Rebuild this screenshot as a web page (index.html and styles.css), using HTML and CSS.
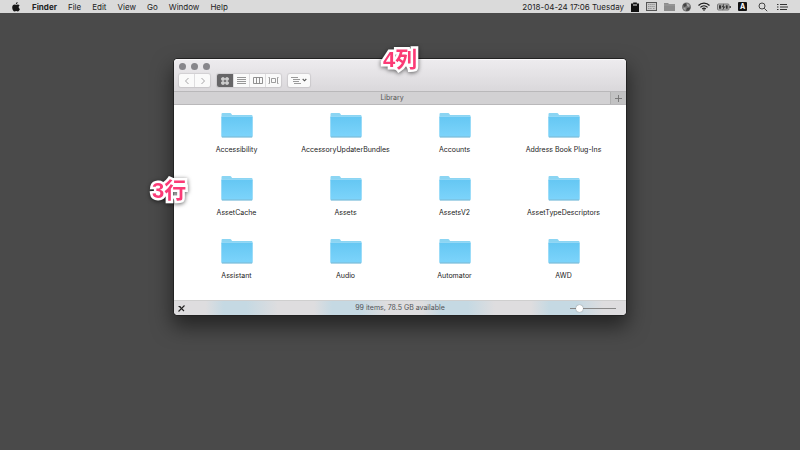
FILE: index.html
```html
<!DOCTYPE html>
<html lang="en">
<head>
<meta charset="utf-8">
<title>Library</title>
<link rel="stylesheet" href="styles.css">
</head>
<body>
<header class="menubar">
  <nav class="menus">
    <button class="menu" aria-label="Apple"><svg width="8" height="10" viewBox="0 0 8 10"><path fill="#161616" d="M5.6 0C5.6 1.3 4.9 2.2 3.8 2.2 3.8 1 4.6.2 5.6 0ZM4.1 2.8C4.7 2.8 5 2.4 5.8 2.4 6.6 2.4 7.2 2.8 7.6 3.4 6.2 4.2 6.4 6.2 7.9 6.9 7.4 8.2 6.7 9.4 5.8 9.4 5.2 9.4 4.9 9.1 4.2 9.1 3.5 9.1 3.2 9.4 2.6 9.4 1.4 9.4.2 7.4.2 5.4.2 3.5 1.3 2.4 2.6 2.4 3.2 2.4 3.7 2.8 4.1 2.8Z"/></svg></button>
    <button class="menu menu-app">Finder</button>
    <button class="menu">File</button>
    <button class="menu">Edit</button>
    <button class="menu">View</button>
    <button class="menu">Go</button>
    <button class="menu">Window</button>
    <button class="menu">Help</button>
  </nav>
  <div class="status">
    <time class="clock">2018-04-24 17:06 Tuesday</time>
    <svg width="8" height="10" viewBox="0 0 8 10"><path fill="#111" d="M0 1.5H2.2V.5H5.8V1.5H8V10H0Z"/><path fill="#ccc" d="M2 2.4H6V3.6H2Z"/></svg>
    <svg width="11" height="9" viewBox="0 0 11 9"><rect x=".5" y=".5" width="10" height="8" fill="#c8c8c8" stroke="#555"/><path stroke="#888" stroke-width=".8" d="M2 2.5H9M2 4.5H9M2 6.5H6M7 6.5H9" stroke-dasharray="1.5 .6"/></svg>
    <svg width="11" height="9" viewBox="0 0 11 9"><path fill="#8c8c8c" d="M0 1H4L5 2H11V9H0Z"/><path stroke="#a8a8a8" stroke-width=".6" d="M0 3H11"/></svg>
    <svg width="9" height="10" viewBox="0 0 9 10"><circle cx="4.5" cy="5" r="4.5" fill="#777"/><path fill="#444" d="M1 2.5 4 1 4.5 4 2 5ZM5 6 8.5 5.5 7 8.5 4 9Z"/><path fill="#aaa" d="M5 1.5 7.5 3 7 5 5 4ZM1 6 3.5 5.5 3.5 8.5Z"/></svg>
    <svg width="12" height="9" viewBox="0 0 12 9"><g fill="none" stroke="#1c1c1c" stroke-width="1.2"><path d="M.5 3.5C3.5.2 8.5.2 11.5 3.5M2.4 5.3C4.5 3.2 7.5 3.2 9.6 5.3M4.2 7C5.3 6 6.7 6 7.8 7"/></g><path fill="#1c1c1c" d="M4.8 7.7 6 9 7.2 7.7Q6 6.9 4.8 7.7Z"/></svg>
    <svg width="14" height="8" viewBox="0 0 14 8"><rect x=".5" y="1" width="11.5" height="6" rx="1" fill="#b4b4b4" stroke="#777"/><path fill="#333" d="M2 2.2H4.2V5.8H2ZM8.8 2.2H10.7V5.8H8.8ZM12.5 3H13.8V5H12.5ZM7 .5 4.5 4.3H6.2L5.5 7.5 8.5 3.5H6.7Z"/></svg>
    <span class="input-source">A</span>
    <svg class="search" width="10" height="10" viewBox="0 0 10 10"><g fill="none" stroke="#444"><circle cx="4" cy="4" r="3"/><path d="M6.2 6.2 9.2 9.2"/></g></svg>
    <svg width="11" height="8" viewBox="0 0 11 8"><path stroke="#333" d="M0 1.5H1.5M0 4H1.5M0 6.5H1.5M3 1.5H10M3 4H11M3 6.5H10"/></svg>
  </div>
</header>

<main class="desktop">
  <section class="window">
    <span class="note note-columns" lang="ja">4列</span>
    <span class="note note-rows" lang="ja">3行</span>
    <div class="titlebar">
      <div class="lights">
        <button class="light" aria-label="Close"></button>
        <button class="light" aria-label="Minimize"></button>
        <button class="light" aria-label="Zoom"></button>
      </div>
      <div class="toolbar">
        <div class="group">
          <button class="tool" aria-label="Back"><svg width="6" height="8" viewBox="0 0 6 8"><path d="M4.5 1 1.5 4 4.5 7" fill="none" stroke="#a5a4a6"/></svg></button>
          <button class="tool" aria-label="Forward"><svg width="6" height="8" viewBox="0 0 6 8"><path d="M1.5 1 4.5 4 1.5 7" fill="none" stroke="#a5a4a6"/></svg></button>
        </div>
        <div class="group">
          <button class="tool tool-active" aria-label="Icons"><svg width="8" height="8" viewBox="0 0 8 8"><g fill="#c4c4c4" stroke="#fff" stroke-width=".6"><rect x=".7" y=".7" width="2.6" height="2.6" rx=".5"/><rect x="4.7" y=".7" width="2.6" height="2.6" rx=".5"/><rect x=".7" y="4.7" width="2.6" height="2.6" rx=".5"/><rect x="4.7" y="4.7" width="2.6" height="2.6" rx=".5"/></g></svg></button>
          <button class="tool" aria-label="List"><svg width="9" height="7" viewBox="0 0 9 7"><path stroke="#8b8b8b" stroke-width=".9" d="M0 .5H9M0 2.5H9M0 4.5H9M0 6.5H9"/></svg></button>
          <button class="tool" aria-label="Columns"><svg width="10" height="7" viewBox="0 0 10 7"><path fill="none" stroke="#858585" stroke-width=".9" d="M.5.5H9.5V6.5H.5ZM3.5.5V6.5M6.5.5V6.5"/></svg></button>
          <button class="tool" aria-label="Cover Flow"><svg width="11" height="7" viewBox="0 0 11 7"><path fill="none" stroke="#858585" stroke-width=".8" d="M3.5 1.5H7.5V5.5H3.5ZM.5.5H1.5V6.5H.5M10.5.5H9.5V6.5H10.5"/></svg></button>
        </div>
        <div class="group">
          <button class="tool tool-wide" aria-label="Arrange"><svg width="16" height="7" viewBox="0 0 16 7"><path stroke="#8f8f8f" stroke-width=".9" d="M0 .5H7M2 2.5H9M2 4.5H8M3 6.5H10"/><path d="M11.7 2 13.5 3.8 15.3 2" fill="none" stroke="#555" stroke-width="1.1"/></svg></button>
        </div>
      </div>
    </div>
    <div class="tabs">
      <button class="tab">Library</button>
      <button class="tab-add" aria-label="New tab"><svg width="7" height="7" viewBox="0 0 7 7"><path stroke="#737373" stroke-width=".9" d="M3.5 0V7M0 3.5H7"/></svg></button>
    </div>
    <svg class="defs" width="0" height="0" aria-hidden="true">
      <defs>
        <linearGradient id="front" x1="0" y1="0" x2="0" y2="1"><stop offset="0" stop-color="#65c7f3"/><stop offset="1" stop-color="#7dd4fb"/></linearGradient>
        <symbol id="folder" viewBox="0 0 32 26"><path fill="#8bd5f3" d="M.5 2Q.5 1 1.5 1H9Q10 1 10.5 2L11 3H30.5Q31.5 3 31.5 4V24H.5Z"/><path fill="#c1e8f8" d="M.5 4H31.5V5H.5Z"/><rect x=".5" y="4.6" width="31" height="20.6" rx=".6" fill="url(#front)"/><path fill="#7db8d2" d="M.5 24.6H31.5L31 25.4H1Z"/></symbol>
      </defs>
    </svg>
    <ul class="files">
      <li class="file"><svg class="folder"><use href="#folder"/></svg><span>Accessibility</span></li>
      <li class="file"><svg class="folder"><use href="#folder"/></svg><span>AccessoryUpdaterBundles</span></li>
      <li class="file"><svg class="folder"><use href="#folder"/></svg><span>Accounts</span></li>
      <li class="file"><svg class="folder"><use href="#folder"/></svg><span>Address Book Plug-Ins</span></li>
      <li class="file"><svg class="folder"><use href="#folder"/></svg><span>AssetCache</span></li>
      <li class="file"><svg class="folder"><use href="#folder"/></svg><span>Assets</span></li>
      <li class="file"><svg class="folder"><use href="#folder"/></svg><span>AssetsV2</span></li>
      <li class="file"><svg class="folder"><use href="#folder"/></svg><span>AssetTypeDescriptors</span></li>
      <li class="file"><svg class="folder"><use href="#folder"/></svg><span>Assistant</span></li>
      <li class="file"><svg class="folder"><use href="#folder"/></svg><span>Audio</span></li>
      <li class="file"><svg class="folder"><use href="#folder"/></svg><span>Automator</span></li>
      <li class="file"><svg class="folder"><use href="#folder"/></svg><span>AWD</span></li>
    </ul>
    <footer class="statusbar">
      <svg width="7" height="7" viewBox="0 0 7 7"><path stroke="#222" stroke-width="1.1" d="M.5 6.5 6.5.5M1.5 1.5 6 6"/><path stroke="#222" d="M.5 1.5H2.5"/></svg>
      <span>99 items, 78.5 GB available</span>
      <input class="size" type="range" min="0" max="100" value="15" aria-label="Icon size">
    </footer>
  </section>
</main>
</body>
</html>
```
FILE: styles.css
```css
* { box-sizing: border-box; }

body {
  margin: 0;
  min-height: 100vh;
  background: #4a4a4a;
  font-family: Inter, "Noto Sans CJK JP", sans-serif;
  font-size: 7px;
  line-height: 10px;
  color: #222;
}

button {
  margin: 0;
  padding: 0;
  border: 0;
  background: none;
  color: inherit;
  font: inherit;
}

svg { display: block; flex: none; }

.menubar {
  display: flex;
  justify-content: space-between;
  align-items: center;
  height: 13px;
  padding: 0 12px;
  background: #dadada;
  font-size: 8px;
}

.menus { display: flex; align-items: center; gap: 11px; }
.menu-app { padding-left: 1px; font-weight: 700; }
.status { display: flex; align-items: center; gap: 7px; }

.input-source {
  width: 9px;
  height: 9px;
  border-radius: 1px;
  background: #111;
  color: #fff;
  font-size: 7px;
  font-weight: 700;
  line-height: 9px;
  text-align: center;
}

.search { margin: 0 2px 0 4px; }

.desktop { padding-top: 46px; }

.window {
  position: relative;
  width: 56.5%;
  margin: 0 auto;
  border-radius: 4px;
  background: #fff;
  box-shadow: 0 0 0 1px #222, 0 10px 20px 2px rgba(0, 0, 0, 0.5);
}

.titlebar {
  padding: 4px 5px;
  border-radius: 4px 4px 0 0;
  background: linear-gradient(#eeecef, #dad8db);
  box-shadow: inset 0 1px #f8f7f8;
}

.lights { display: flex; gap: 5px; }

.light {
  width: 7px;
  height: 7px;
  border-radius: 50%;
  background: #87868b;
}

.toolbar { display: flex; gap: 7px; padding-top: 4px; }

.group {
  display: flex;
  gap: 1px;
  border-radius: 2px;
  background: #dedddf;
  box-shadow: 0 0 1px 1px rgba(0, 0, 0, 0.09);
  overflow: hidden;
}

.tool {
  display: grid;
  place-items: center;
  width: 15px;
  height: 13px;
  background: #fafafa;
}

.tool-active { width: 16px; background: #666567; }
.tool-wide { width: 22px; }

.tabs {
  display: flex;
  height: 14px;
  border: solid #b9b8ba;
  border-width: 1px 0;
  background: #d2d1d3;
}

.tab { flex: 1; color: #555; }

.tab-add {
  display: grid;
  place-items: center;
  width: 16px;
  border-left: 1px solid #b0b0b0;
  background: #c2c2c3;
}

.defs { position: absolute; }

.files {
  display: grid;
  grid-template-columns: repeat(4, 1fr);
  row-gap: 20px;
  margin: 0;
  padding: 7px 8px 19px;
  list-style: none;
}

.file {
  display: flex;
  flex-direction: column;
  align-items: center;
  gap: 7px;
  white-space: nowrap;
}

.folder { width: 32px; height: 26px; }

.statusbar {
  display: grid;
  grid-template-columns: 1fr auto 1fr;
  align-items: center;
  height: 15px;
  padding: 0 4px;
  border-top: 1px solid #cfcfcf;
  border-radius: 0 0 4px 4px;
  background: linear-gradient(90deg, #dedddf 7%, #c5d9e3 11% 16%, #dedddf 23% 31%, #c5d9e3 35% 41%, #dedddf 47% 55%, #c5d9e3 59% 65%, #dedddf 71% 79%, #c5d9e3 83% 89%, #dedddf 95%);
  color: #505356;
}

.size {
  appearance: none;
  justify-self: end;
  width: 46px;
  height: 8px;
  margin: 0 6px 0 0;
  background: linear-gradient(#888, #888) center / 100% 1px no-repeat;
}

.size::-webkit-slider-thumb {
  appearance: none;
  width: 7px;
  height: 7px;
  border-radius: 50%;
  background: #fff;
  box-shadow: 0 0 1px #555;
}

.note {
  position: absolute;
  z-index: 1;
  color: #fb3b76;
  font-family: "Liberation Sans", "Noto Sans CJK JP", sans-serif;
  font-size: 22px;
  font-weight: 700;
  line-height: 26px;
  white-space: nowrap;
  -webkit-text-stroke: 5px #fff;
  paint-order: stroke fill;
  filter: drop-shadow(0 1px 2px rgba(0, 0, 0, 0.6));
}

.note-columns { top: -12px; left: 50%; transform: translateX(-17px); }
.note-rows { top: 119px; left: -22px; }
```
